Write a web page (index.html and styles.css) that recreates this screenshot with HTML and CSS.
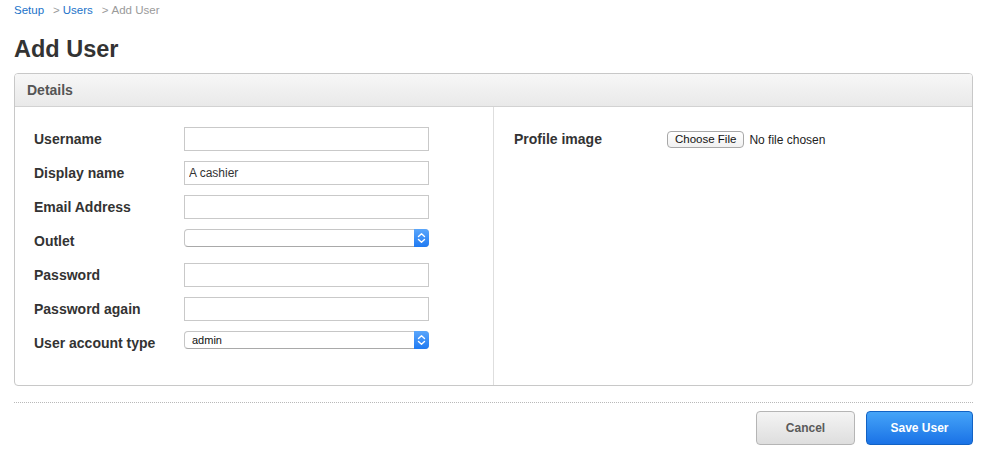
FILE: index.html
```html
<!DOCTYPE html>
<html>
<head>
<meta charset="utf-8">
<link rel="stylesheet" href="styles.css">
</head>
<body>
<div class="page">
  <nav class="crumbs">
    <a href="#">Setup</a><span class="sep">&gt;</span><a href="#">Users</a><span class="sep">&gt;</span><span class="current">Add User</span>
  </nav>
  <h1 class="title">Add User</h1>
  <section class="panel">
    <header class="panel-head">Details</header>
    <div class="panel-body">
      <div class="col col-left">
        <div class="field">
          <label class="label">Username</label>
          <input class="text" type="text" value="">
        </div>
        <div class="field">
          <label class="label">Display name</label>
          <input class="text" type="text" value="A cashier">
        </div>
        <div class="field">
          <label class="label">Email Address</label>
          <input class="text" type="text" value="">
        </div>
        <div class="field">
          <label class="label">Outlet</label>
          <div class="select">
            <span class="select-value"></span>
            <span class="stepper"><svg width="9" height="12" viewBox="0 0 9 12"><path d="M1.5 4.5 L4.5 1.8 L7.5 4.5 M1.5 7.5 L4.5 10.2 L7.5 7.5" fill="none" stroke="#fff" stroke-width="1.4" stroke-linecap="round" stroke-linejoin="round"/></svg></span>
          </div>
        </div>
        <div class="field">
          <label class="label">Password</label>
          <input class="text" type="password" value="">
        </div>
        <div class="field">
          <label class="label">Password again</label>
          <input class="text" type="password" value="">
        </div>
        <div class="field">
          <label class="label">User account type</label>
          <div class="select">
            <span class="select-value">admin</span>
            <span class="stepper"><svg width="9" height="12" viewBox="0 0 9 12"><path d="M1.5 4.5 L4.5 1.8 L7.5 4.5 M1.5 7.5 L4.5 10.2 L7.5 7.5" fill="none" stroke="#fff" stroke-width="1.4" stroke-linecap="round" stroke-linejoin="round"/></svg></span>
          </div>
        </div>
      </div>
      <div class="col col-right">
        <div class="field field-file">
          <label class="label label-wide">Profile image</label>
          <div class="file">
            <span class="file-btn">Choose File</span>
            <span class="file-status">No file chosen</span>
          </div>
        </div>
      </div>
    </div>
  </section>
  <div class="actions">
    <button class="btn btn-cancel" type="button">Cancel</button>
    <button class="btn btn-save" type="button">Save User</button>
  </div>
</div>
</body>
</html>
```
FILE: styles.css
```css
* { box-sizing: border-box; }
html, body { margin: 0; padding: 0; background: #fff; }
body {
  font-family: "Liberation Sans", Arial, Helvetica, sans-serif;
  color: #333;
}
.page {
  padding: 3px 19px 0 14px;
}
.crumbs {
  font-size: 11.5px;
  line-height: 14px;
  height: 14px;
  color: #999;
}
.crumbs a {
  color: #1a72c9;
  text-decoration: none;
}
.crumbs .sep {
  color: #9a9a9a;
  margin: 0 3px 0 9px;
}
.crumbs .current { color: #9a9a9a; }

.title {
  margin: 18px 0 10px;
  font-size: 23.5px;
  line-height: 28px;
  font-weight: bold;
  color: #333;
}

.panel {
  border: 1px solid #c8c8c8;
  border-radius: 4px;
  overflow: hidden;
}
.panel-head {
  height: 33px;
  line-height: 32px;
  padding-left: 12px;
  font-size: 14px;
  font-weight: bold;
  color: #555;
  background: linear-gradient(#f7f7f7, #e9e9e9);
  border-bottom: 1px solid #d2d2d2;
}
.panel-body {
  display: grid;
  grid-template-columns: 479px 1fr;
}
.col {
  padding: 20px 0 30px 19px;
  display: flex;
  flex-direction: column;
  gap: 10px;
}
.col-left { border-right: 1px solid #dedede; }
.col-right { padding-left: 20px; }

.field {
  display: flex;
  align-items: flex-start;
  height: 24px;
}
.label {
  width: 150px;
  flex: none;
  font-size: 14px;
  font-weight: bold;
  line-height: 24px;
  color: #333;
}
.label-wide { width: 153px; }

.text {
  width: 245px;
  height: 24px;
  margin: 0;
  padding: 0 4px;
  border: 1px solid #c9c9c9;
  border-radius: 0;
  font-family: "Liberation Sans", Arial, sans-serif;
  font-size: 12px;
  color: #333;
  background: #fff;
  outline: none;
}

.select {
  position: relative;
  width: 245px;
  height: 18px;
  border: 1px solid #c6c6c6;
  border-bottom-color: #a9a9a9;
  border-radius: 4px;
  background: #fff;
  font-size: 11px;
  line-height: 16px;
  color: #111;
}
.select-value {
  display: block;
  padding-left: 7px;
}
.stepper {
  position: absolute;
  top: -1px;
  right: -1px;
  bottom: -1px;
  width: 15px;
  border-radius: 0 4px 4px 0;
  background: linear-gradient(#5aa6fb, #1f7af2);
  display: flex;
  align-items: center;
  justify-content: center;
}

.file {
  display: flex;
  align-items: center;
  height: 24px;
  gap: 5px;
  padding-top: 1px;
}
.file-btn {
  display: inline-block;
  height: 17px;
  line-height: 15px;
  padding: 0 7px;
  border: 1px solid #a8a8a8;
  border-radius: 4px;
  background: linear-gradient(#ffffff, #f1f1f1);
  font-size: 11.5px;
  color: #111;
}
.file-status {
  font-size: 12px;
  color: #222;
}

.actions {
  margin-top: 16px;
  border-top: 1px dotted #b9b9b9;
  padding-top: 8px;
  display: flex;
  justify-content: flex-end;
  gap: 11px;
}
.btn {
  height: 34px;
  border-radius: 4px;
  font-family: "Liberation Sans", Arial, sans-serif;
  font-size: 12px;
  font-weight: bold;
  cursor: pointer;
  padding: 0;
}
.btn-cancel {
  width: 99px;
  color: #5a5a5a;
  border: 1px solid #b5b5b5;
  background: linear-gradient(#f4f4f4, #dedede);
}
.btn-save {
  width: 107px;
  color: #fff;
  border: 1px solid #1262c4;
  background: linear-gradient(#45a4f8, #1a72e6);
}
```
